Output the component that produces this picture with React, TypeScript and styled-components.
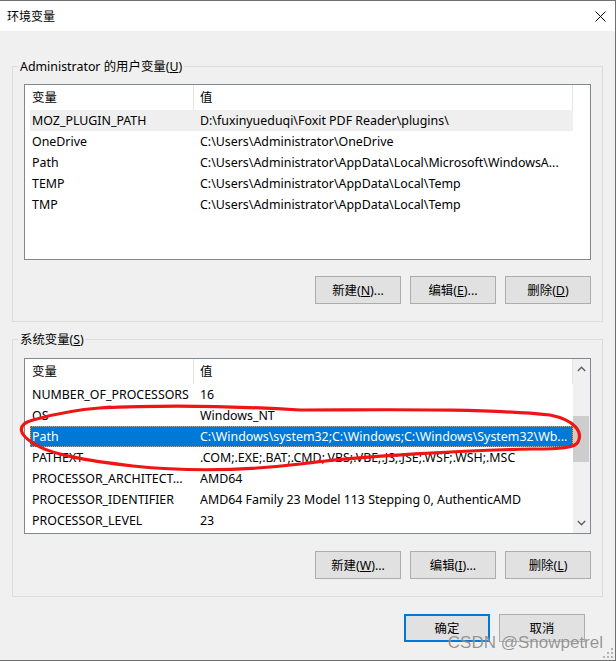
import React from "react";
import styled, { createGlobalStyle } from "styled-components";

const GlobalStyle = createGlobalStyle`
  html, body {
    margin: 0;
    padding: 0;
    background: #f0f0f0;
  }
  body {
    font-family: "Noto Sans", "Noto Sans CJK SC", sans-serif;
    font-size: 12.4px;
    color: #000;
  }
`;

const Window = styled.div`
  position: relative;
  width: 616px;
  height: 661px;
  box-sizing: border-box;
  border-top: 1px solid #707070;
  border-right: 1px solid #707070;
  border-bottom: 1px solid #707070;
  background: #f0f0f0;
  display: flex;
  flex-direction: column;
  overflow: hidden;
`;

const TitleBar = styled.div`
  height: 30px;
  flex: none;
  background: #fff;
  display: flex;
  align-items: center;
  justify-content: space-between;
  padding-left: 7px;
  padding-right: 9px;
`;

const TitleText = styled.span`
  font-size: 12px;
  line-height: 16px;
  padding-top: 2px;
`;

const CloseIcon = styled.svg`
  width: 11px;
  height: 11px;
  display: block;
  margin-top: 1px;
`;

const Body = styled.div`
  flex: 1;
  display: flex;
  flex-direction: column;
  padding: 27px 12px 0 12px;
`;

const Group = styled.fieldset<{ $gap?: number; $padTop?: number }>`
  margin: ${(p) => p.$gap ?? 0}px 0 0 0;
  padding: ${(p) => p.$padTop ?? 9}px 11px 17px 11px;
  border: 1px solid #dcdcdc;
  min-width: 0;
  display: flex;
  flex-direction: column;
`;

const Legend = styled.legend`
  padding: 0 2px;
  margin-left: -6px;
  line-height: 17px;
  font-size: 12.4px;
`;

const ListView = styled.div`
  height: 176px;
  box-sizing: border-box;
  border: 1px solid #828790;
  background: #fff;
  display: flex;
  overflow: hidden;
`;

const ListContent = styled.div`
  flex: 1;
  display: flex;
  flex-direction: column;
  min-width: 0;
`;

const HeaderRow = styled.div`
  height: 25px;
  flex: none;
  display: flex;
`;

const HeaderCell = styled.div<{ $w?: number }>`
  ${(p) => (p.$w ? `width: ${p.$w}px; flex: none;` : "flex: 1;")}
  box-sizing: border-box;
  border-right: ${(p) => (p.$w ? "1px solid #e5e5e5" : "none")};
  padding-left: ${(p) => (p.$w === 169 ? 7 : 6)}px;
  line-height: 25px;
  white-space: nowrap;
`;

const Row = styled.div<{ $state?: "selected" | "soft" }>`
  height: 21px;
  margin-left: 5px;
  width: 543px;
  display: flex;
  line-height: 21px;
  box-sizing: border-box;
  background: ${(p) =>
    p.$state === "selected" ? "#0078d7" : p.$state === "soft" ? "#efefef" : "transparent"};
  color: ${(p) => (p.$state === "selected" ? "#fff" : "#000")};
  outline: ${(p) => (p.$state === "selected" ? "1px dotted #ff9a3c" : "none")};
  outline-offset: -1px;
`;

const NameCell = styled.div`
  width: 164px;
  flex: none;
  box-sizing: border-box;
  padding-left: 2px;
  white-space: nowrap;
  overflow: hidden;
`;

const ValueCell = styled.div`
  flex: 1;
  padding-left: 6px;
  white-space: nowrap;
  overflow: hidden;
`;

const ScrollBar = styled.div`
  width: 17px;
  flex: none;
  background: #f0f0f0;
  display: flex;
  flex-direction: column;
`;

const ScrollArrow = styled.div`
  height: 20px;
  flex: none;
  display: flex;
  align-items: center;
  justify-content: center;
`;

const ScrollTrack = styled.div`
  flex: 1;
  padding-top: 37px;
`;

const Thumb = styled.div`
  height: 46px;
  width: 16px;
  background: #cdcdcd;
`;

const ButtonRow = styled.div<{ $top: number }>`
  display: flex;
  justify-content: flex-end;
  gap: 9px;
  margin-top: ${(p) => p.$top}px;
`;

const Button = styled.div<{ $default?: boolean }>`
  width: 86px;
  height: 28px;
  box-sizing: border-box;
  background: #e1e1e1;
  border: ${(p) => (p.$default ? "2px solid #0078d7" : "1px solid #adadad")};
  display: flex;
  align-items: center;
  justify-content: center;
  font-size: 12.4px;
  white-space: nowrap;
`;

const Footer = styled.div`
  display: flex;
  justify-content: flex-end;
  gap: 9px;
  margin-top: 17px;
  padding-right: 18px;
`;

const Overlay = styled.svg`
  position: absolute;
  left: 0;
  top: -1px;
  width: 616px;
  height: 661px;
  pointer-events: none;
`;

const Watermark = styled.div`
  position: absolute;
  right: 12px;
  bottom: 7px;
  font-family: "Liberation Sans", Arial, sans-serif;
  font-size: 17px;
  line-height: 20px;
  color: rgba(115, 115, 115, 0.75);
  text-shadow: 0 0 1px rgba(255, 255, 255, 0.6);
  pointer-events: none;
  white-space: nowrap;
`;

const Grip = styled.svg`
  position: absolute;
  right: 1px;
  bottom: 1px;
  width: 12px;
  height: 12px;
`;

type Item = { name: string; value: string; state?: "selected" | "soft" };

const userVars: Item[] = [
  { name: "MOZ_PLUGIN_PATH", value: "D:\\fuxinyueduqi\\Foxit PDF Reader\\plugins\\", state: "soft" },
  { name: "OneDrive", value: "C:\\Users\\Administrator\\OneDrive" },
  { name: "Path", value: "C:\\Users\\Administrator\\AppData\\Local\\Microsoft\\WindowsA..." },
  { name: "TEMP", value: "C:\\Users\\Administrator\\AppData\\Local\\Temp" },
  { name: "TMP", value: "C:\\Users\\Administrator\\AppData\\Local\\Temp" },
];

const sysVars: Item[] = [
  { name: "NUMBER_OF_PROCESSORS", value: "16" },
  { name: "OS", value: "Windows_NT" },
  { name: "Path", value: "C:\\Windows\\system32;C:\\Windows;C:\\Windows\\System32\\Wb...", state: "selected" },
  { name: "PATHEXT", value: ".COM;.EXE;.BAT;.CMD;.VBS;.VBE;.JS;.JSE;.WSF;.WSH;.MSC" },
  { name: "PROCESSOR_ARCHITECT...", value: "AMD64" },
  { name: "PROCESSOR_IDENTIFIER", value: "AMD64 Family 23 Model 113 Stepping 0, AuthenticAMD" },
  { name: "PROCESSOR_LEVEL", value: "23" },
];

const Header = () => (
  <HeaderRow>
    <HeaderCell $w={169}>变量</HeaderCell>
    <HeaderCell $w={379}>值</HeaderCell>
    <HeaderCell />
  </HeaderRow>
);

const Rows = ({ items }: { items: Item[] }) => (
  <>
    {items.map((it) => (
      <Row key={it.name} $state={it.state}>
        <NameCell>{it.name}</NameCell>
        <ValueCell>{it.value}</ValueCell>
      </Row>
    ))}
  </>
);

const Chevron = ({ up }: { up?: boolean }) => (
  <svg width="9" height="6" viewBox="0 0 9 6">
    <polyline
      points={up ? "0.8,5 4.5,1.3 8.2,5" : "0.8,1 4.5,4.7 8.2,1"}
      fill="none"
      stroke="#606060"
      strokeWidth="1.4"
    />
  </svg>
);

const Btn = ({ label, k, dots }: { label: string; k: string; dots?: boolean }) => (
  <Button>
    {label}(<u>{k}</u>){dots ? "..." : ""}
  </Button>
);

export default function App() {
  return (
    <>
      <GlobalStyle />
      <Window>
        <TitleBar>
          <TitleText>环境变量</TitleText>
          <CloseIcon viewBox="0 0 11 11">
            <path d="M0.5 0.5 L10.5 10.5 M10.5 0.5 L0.5 10.5" stroke="#000" strokeWidth="1" fill="none" />
          </CloseIcon>
        </TitleBar>
        <Body>
          <Group>
            <Legend>
              Administrator 的用户变量(<u>U</u>)
            </Legend>
            <ListView>
              <ListContent>
                <Header />
                <Rows items={userVars} />
              </ListContent>
            </ListView>
            <ButtonRow $top={16}>
              <Btn label="新建" k="N" dots />
              <Btn label="编辑" k="E" dots />
              <Btn label="删除" k="D" />
            </ButtonRow>
          </Group>
          <Group $gap={9} $padTop={10}>
            <Legend>
              系统变量(<u>S</u>)
            </Legend>
            <ListView>
              <ListContent>
                <Header />
                <Rows items={sysVars} />
              </ListContent>
              <ScrollBar>
                <ScrollArrow>
                  <Chevron up />
                </ScrollArrow>
                <ScrollTrack>
                  <Thumb />
                </ScrollTrack>
                <ScrollArrow>
                  <Chevron />
                </ScrollArrow>
              </ScrollBar>
            </ListView>
            <ButtonRow $top={17}>
              <Btn label="新建" k="W" dots />
              <Btn label="编辑" k="I" dots />
              <Btn label="删除" k="L" />
            </ButtonRow>
          </Group>
          <Footer>
            <Button $default>确定</Button>
            <Button>取消</Button>
          </Footer>
        </Body>
        <Overlay viewBox="0 0 616 661">
          <path
            d="M 100 408 C 180 404, 250 407, 300 410 C 380 410, 480 408, 550 415 C 575 420, 583 432, 578 442 C 575 448, 560 449, 533 449 C 470 450, 360 456, 300 464 C 250 470, 190 472, 133 466 C 90 461, 50 455, 33 443 C 20 435, 15 425, 33 420 C 50 415, 70 410, 110 407"
            fill="none"
            stroke="#f01414"
            strokeWidth="3.2"
            strokeLinecap="round"
            strokeLinejoin="round"
          />
        </Overlay>
        <Watermark>CSDN @Snowpetrel</Watermark>
        <Grip viewBox="0 0 12 12">
          {[
            [9, 1],
            [9, 5],
            [5, 5],
            [9, 9],
            [5, 9],
            [1, 9],
          ].map(([x, y]) => (
            <rect key={`${x}-${y}`} x={x} y={y} width="2" height="2" fill="#b4b4b4" />
          ))}
        </Grip>
      </Window>
    </>
  );
}
